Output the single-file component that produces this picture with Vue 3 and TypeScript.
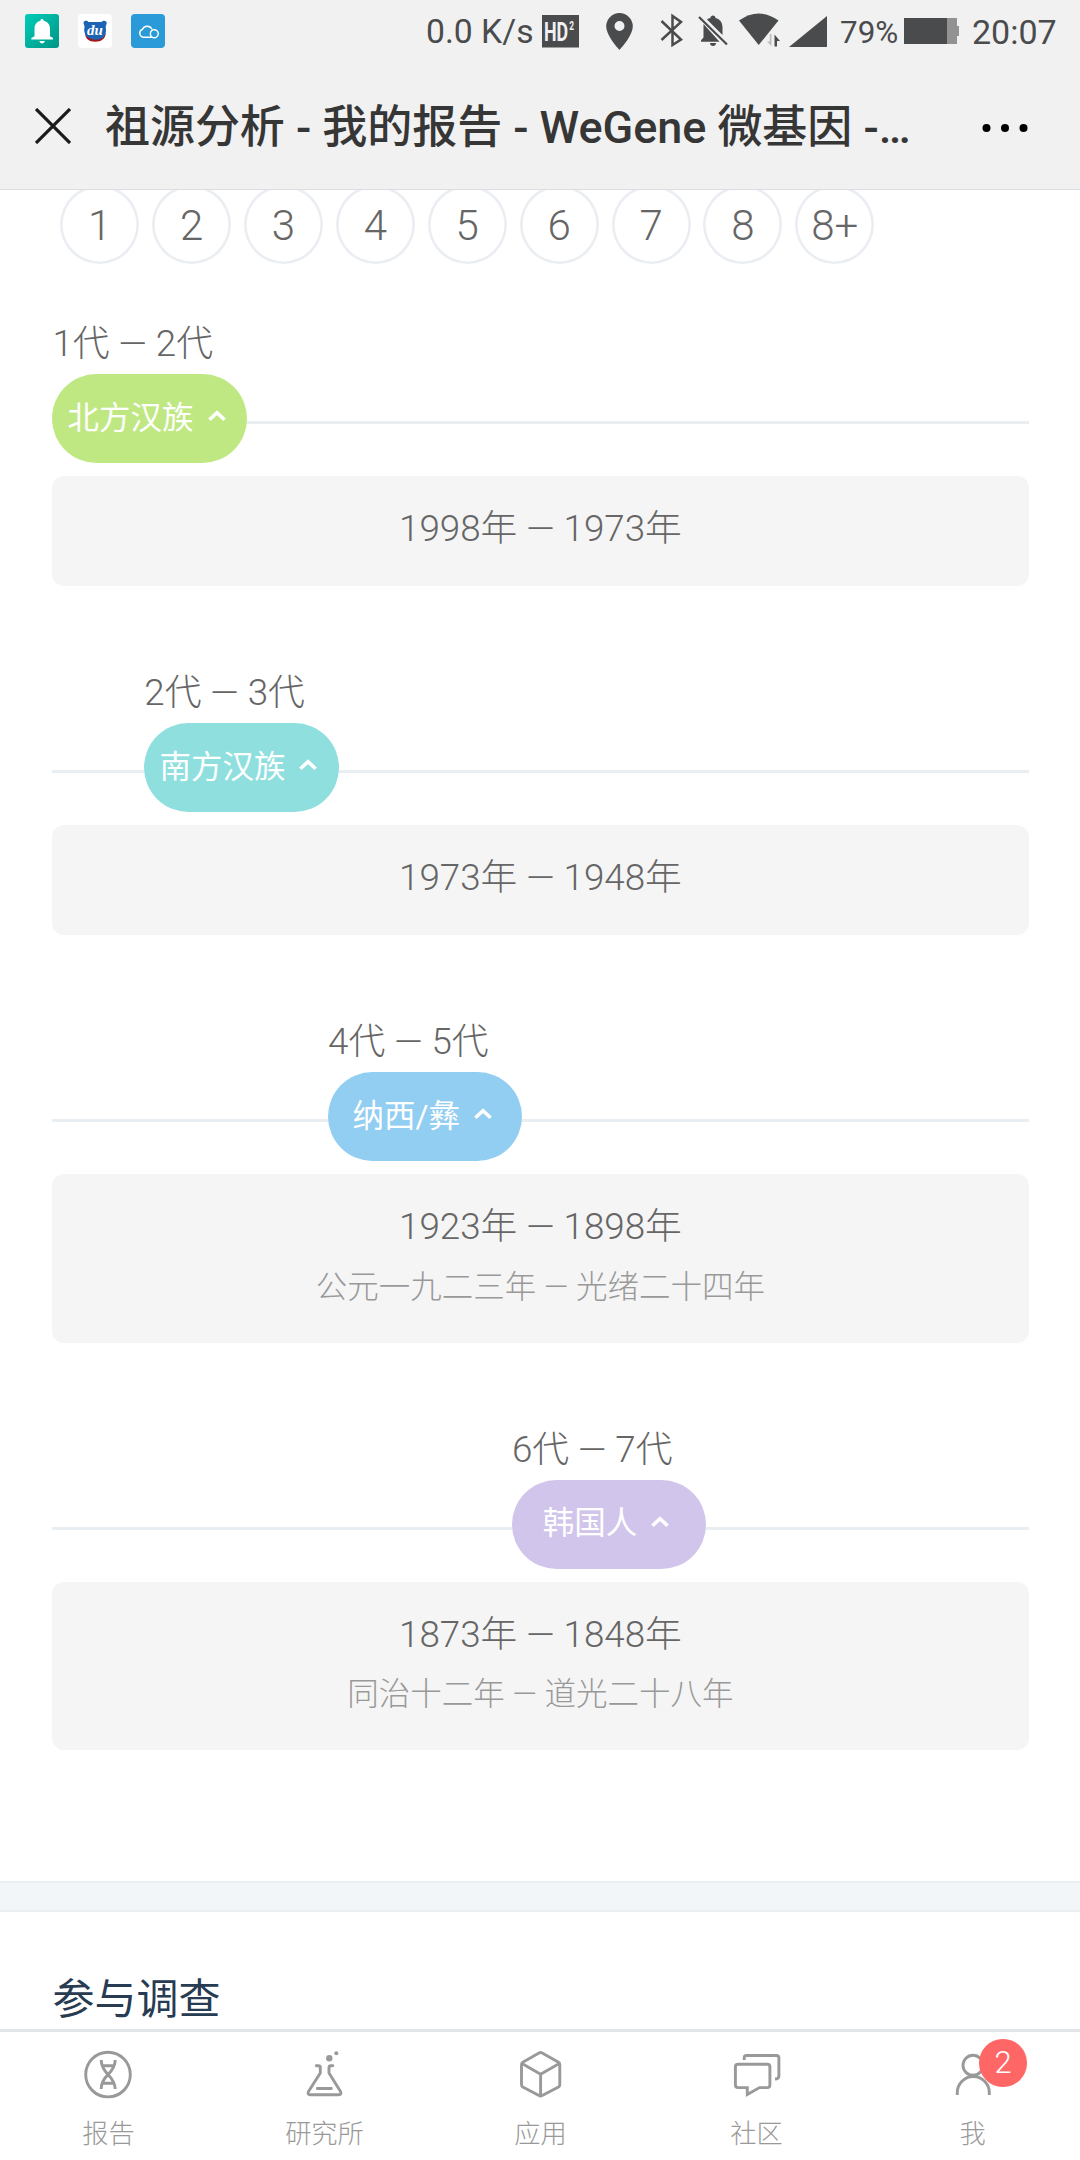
<script setup lang="ts">
interface Period {
  from: number
  to: number
  name: string
  color: string
  years: string
  era?: string
}

const generations: string[] = ['1', '2', '3', '4', '5', '6', '7', '8', '8+']

const STEP = 91.9

const periods: Period[] = [
  { from: 1, to: 2, name: '北方汉族', color: '#bfe883', years: '1998年 — 1973年' },
  { from: 2, to: 3, name: '南方汉族', color: '#8fdfdf', years: '1973年 — 1948年' },
  { from: 4, to: 5, name: '纳西/彝', color: '#92cdf2', years: '1923年 — 1898年', era: '公元一九二三年 — 光绪二十四年' },
  { from: 6, to: 7, name: '韩国人', color: '#d1c5eb', years: '1873年 — 1848年', era: '同治十二年 — 道光二十八年' },
]

const offset = (p: Period): string => `${(p.from - 1) * STEP}px`
</script>

<template>
  <div class="screen">
    <header class="status">
      <div class="apps">
        <svg width="34" height="34" viewBox="0 0 34 34">
          <defs>
            <linearGradient id="teal" x1="0" y1="0" x2="1" y2="1">
              <stop offset="0" stop-color="#00cdb8" />
              <stop offset="1" stop-color="#019585" />
            </linearGradient>
          </defs>
          <rect width="34" height="34" rx="3" fill="url(#teal)" />
          <path d="M17 5c1 0 1.6.7 1.7 1.7C22.600 7.600 25 10.500 25 14.500V22.300L28 24v1.500H6.300V24L9.500 22.300V14.500C9.500 10.500 11.800 7.600 15.400 6.700 15.500 5.700 16 5 17 5zM14.200 27h5.800c-.8 1.600-1.600 2.500-2.900 2.500s-2.200-.9-2.900-2.500z" fill="#fff" />
        </svg>
        <svg width="34" height="34" viewBox="0 0 34 34">
          <rect width="34" height="34" rx="4" fill="#fff" />
          <path d="M7 18c0 7 4 9.700 10.300 9.700S27 25 28 19L24 24H12z" fill="#a3171b" />
          <path d="M5.500 8.500C6 6.500 9 6 10.500 8h13C25 6 28.500 6.500 28.700 8.800 28.700 10.500 27.700 11.500 27.700 13 29 20 26.500 25.800 17.500 25.800 8 25 5.300 19 6.500 13.500 6.800 11.500 5.500 10.500 5.500 8.500z" fill="#1c62b5" />
          <text x="17" y="21" text-anchor="middle" font-family="Liberation Serif, serif" font-style="italic" font-weight="700" font-size="15" fill="#fff">du</text>
        </svg>
        <svg width="34" height="34" viewBox="0 0 34 34">
          <rect width="34" height="34" rx="4" fill="#2a9bd8" />
          <path d="M20.500 23.200H12.300A4 4 0 0 1 11.300 15.500 5.300 5.300 0 0 1 21 15.200M19.800 17.800a4 4 0 1 1-.2 3.400c-.4-1.200-.2-2.600.2-3.400z" fill="none" stroke="#fff" stroke-width="1.400" />
        </svg>
      </div>
      <span class="speed">0.0 K/s</span>
      <svg class="signals" width="290" height="62" viewBox="540 0 290 62" fill="#4a4b4d">
        <rect x="542" y="15" width="37" height="32.500" />
        <text transform="translate(544 40.800) scale(.7 1)" font-family="Roboto, sans-serif" font-weight="700" font-size="25.500" fill="#f1f1f1">HD<tspan dx="1.500" dy="-10.500" font-size="12">2</tspan></text>
        <path fill-rule="evenodd" d="M619.500 13a13.300 13.300 0 0 0-13.300 13.300C606.200 36 619.500 50 619.500 50S632.800 36 632.800 26.300A13.300 13.300 0 0 0 619.500 13zm0 8a5 5 0 1 1 0 10 5 5 0 0 1 0-10z" />
        <path d="M661.500 21L681 39.500 672.500 45V16L681 22 661.500 40" fill="none" stroke="#4a4b4d" stroke-width="2.500" />
        <path d="M713 15.500c1.500 0 2.500 1 2.500 2.600 4.500 1.200 7 4.500 7 9.400v7.500L707 19.500c.9-.7 2-1.200 3.400-1.500 0-1.500 1.100-2.500 2.600-2.500zM703.500 24L719.500 41.700H701v-1.500l2.500-2.700zM710 43h6c0 1.800-1.300 3-3 3s-3-1.200-3-3z" />
        <path d="M699 17L727 44.500" fill="none" stroke="#4a4b4d" stroke-width="2.200" />
        <path d="M739 20.500Q758.700 6.500 778.500 20.500L758.700 45z" />
        <path d="M771.500 34V46L767 41.500H769.800V34z" fill="#bbb" />
        <path d="M774.500 34.500L780 41H777V46.500H774.500z" />
        <path d="M827 16V47H789z" />
      </svg>
      <span class="percent">79%</span>
      <svg class="battery" width="56" height="62" viewBox="0 0 56 62">
        <rect x="0" y="18" width="43" height="26" fill="#4a4b4d" />
        <rect x="43" y="18" width="10" height="26" fill="#929292" />
        <rect x="53" y="26" width="2" height="10" fill="#929292" />
      </svg>
      <span class="clock">20:07</span>
    </header>

    <div class="titlebar">
      <svg class="close" width="36" height="36" viewBox="0 0 36 36">
        <path d="M1 1L35 35M35 1L1 35" stroke="#1a1a1a" stroke-width="3.200" fill="none" />
      </svg>
      <h1>祖源分析 - 我的报告 - WeGene 微基因 -…</h1>
      <svg class="more" width="46" height="10" viewBox="0 0 46 10">
        <circle cx="4.500" cy="5" r="4" /><circle cx="23" cy="5" r="4" /><circle cx="41.500" cy="5" r="4" />
      </svg>
    </div>

    <main>
      <div class="generations">
        <span v-for="g in generations" :key="g" class="gen">{{ g }}</span>
      </div>

      <section v-for="p in periods" :key="p.from" class="period">
        <div class="label" :style="{ marginLeft: offset(p) }">{{ p.from }}代 — {{ p.to }}代</div>
        <div class="track">
          <div class="pill" :style="{ marginLeft: offset(p), backgroundColor: p.color }">
            <span>{{ p.name }}</span>
            <svg width="18" height="12" viewBox="0 0 18 12">
              <path d="M1.400 9.700L9 2.700 16.600 9.700" fill="none" stroke="#fff" stroke-width="3.600" />
            </svg>
          </div>
        </div>
        <div class="card">
          <p class="years">{{ p.years }}</p>
          <p v-if="p.era" class="era">{{ p.era }}</p>
        </div>
      </section>

      <div class="divider"></div>
      <h2>参与调查</h2>
    </main>

    <nav>
      <a class="tab">
        <svg viewBox="0 0 72 60">
          <circle cx="36" cy="30.600" r="22.300" />
          <path d="M29.200 16C29.200 23 32.500 26.800 36 30.400 39.500 34 43.200 38 43.200 45M43.200 16C43.200 23 39.700 26.800 36.200 30.400 32.500 34 29.200 38 29.200 45M30.500 21.700H42M30.500 39.300H42" />
        </svg>
        <span>报告</span>
      </a>
      <a class="tab">
        <svg viewBox="0 0 72 60">
          <path stroke-linecap="round" stroke-linejoin="round" d="M28.300 21.800H30.500Q32.300 21.800 32.300 23.600V29L20.500 47.500Q19 50.700 22.200 50.700H50.800Q54 50.700 52.500 47.500L41 29V23.600Q41 21.800 42.800 21.800H44.800M29.300 44.500H43.300" />
          <circle class="solid" cx="41.300" cy="14.300" r="3.200" />
          <circle class="solid" cx="48.300" cy="9.300" r="2" />
        </svg>
        <span>研究所</span>
      </a>
      <a class="tab">
        <svg viewBox="0 0 72 60">
          <path stroke-linejoin="round" d="M35 9Q36.600 8 38.200 9L54.500 18.300Q55.800 19.200 55.800 20.800V40.600Q55.800 42.200 54.500 43L38.200 51.500Q36.600 52.400 35 51.500L18.800 43Q17.500 42.200 17.500 40.600V20.800Q17.500 19.200 18.800 18.300ZM18 19.500L36.600 30.200 55.300 19.500M36.600 30.200V52" />
        </svg>
        <span>应用</span>
      </a>
      <a class="tab">
        <svg viewBox="0 0 72 60">
          <path d="M18 20.300H47.300Q49.900 20.300 49.900 22.900V41Q49.900 43.600 47.300 43.600H39.500L27.300 50.500V43.600H18Q15.400 43.600 15.400 41V22.900Q15.400 20.300 18 20.300Z" />
          <path d="M24.200 16V13.800Q24.200 11.500 26.500 11.500H56.300Q58.900 11.500 58.900 14.100V32Q58.900 35 55 35" />
        </svg>
        <span>社区</span>
      </a>
      <a class="tab">
        <svg viewBox="0 0 72 60">
          <circle cx="37" cy="21.300" r="10" />
          <path d="M21.300 51V48.500A16 16 0 0 1 53.300 48.500V51" />
        </svg>
        <span>我</span>
        <b class="badge">2</b>
      </a>
    </nav>
  </div>
</template>

<style>
body {
  margin: 0;
  background: #fff;
}
</style>

<style scoped>
.screen {
  width: 1080px;
  height: 2160px;
  display: flex;
  flex-direction: column;
  overflow: hidden;
  background: #fff;
  color: #666;
  font-family: Roboto, "Noto Sans CJK SC", sans-serif;
  font-weight: 300;
}
.status {
  height: 62px;
  flex: none;
  display: flex;
  background: #f1f1f1;
  color: #4a4b4d;
  font-weight: 400;
  line-height: 64px;
  white-space: nowrap;
}
.status svg { display: block; flex: none; }
.apps {
  box-sizing: border-box;
  display: flex;
  gap: 19px;
  padding: 14px 0 0 25px;
  width: 426px;
}
.speed { width: 114px; font-size: 33.700px; }
.percent { width: 64px; margin-left: 10px; font-size: 31.400px; line-height: 66px; }
.clock { margin-left: 12px; font-size: 34px; }
.titlebar {
  height: 127px;
  flex: none;
  display: flex;
  align-items: center;
  background: #f1f1f1;
  border-bottom: 1px solid #dcdfe1;
}
.close { margin: 1px 0 0 34.500px; flex: none; }
h1 {
  margin: 5px 0 0 34.500px;
  width: 877px;
  font-size: 45px;
  letter-spacing: -0.050px;
  line-height: 60px;
  font-weight: 500;
  color: #363636;
  white-space: nowrap;
}
.more { margin-top: 5px; flex: none; }
main {
  flex: 1;
  min-height: 0;
  overflow: hidden;
}
.generations {
  display: flex;
  gap: 12.900px;
  margin: -5px 0 50px 60.200px;
}
.gen {
  width: 79px;
  height: 79px;
  box-shadow: inset 0 0 0 2.600px #eaeef2;
  border-radius: 50%;
  text-align: center;
  font-size: 42px;
  line-height: 82px;
}
.period { margin: 0 51.500px 77px 52.400px; }
.label {
  height: 60px;
  line-height: 59px;
  font-size: 36.750px;
  white-space: nowrap;
}
.track {
  height: 89px;
  background: linear-gradient(#e9eef2, #e9eef2) 0 47px / 100% 3px no-repeat;
}
.pill {
  width: 194.300px;
  height: 89px;
  border-radius: 44.500px;
  display: flex;
  align-items: center;
  justify-content: center;
  color: #fff;
  font-size: 31.500px;
  font-weight: 400;
  line-height: 50px;
}
.pill svg { margin: -5px 6px 0 14px; }
.card {
  margin-top: 13px;
  padding: 28px 0 32px;
  border-radius: 12px;
  background: #f5f5f5;
  text-align: center;
}
.card p { margin: 0; line-height: 50px; height: 50px; }
.years { font-size: 36.750px; }
.card .era { margin-top: 10.500px; margin-bottom: -2px; font-size: 31.500px; color: #999; }
.divider {
  margin-top: 131px;
  height: 27px;
  background: #f3f6f9;
  border-top: 2px solid #ebeef1;
  border-bottom: 2px solid #ebeef1;
}
h2 {
  margin: 58px 0 0 52.500px;
  font-size: 42px;
  font-weight: 400;
  line-height: 60px;
  color: #273b52;
}
nav {
  height: 128px;
  flex: none;
  display: flex;
  background: #fff;
  border-top: 3px solid #e1e5e8;
}
.tab {
  flex: 1;
  position: relative;
  display: flex;
  flex-direction: column;
  align-items: center;
  padding-top: 12px;
  color: #999;
  font-size: 26.250px;
}
.tab svg {
  width: 72px;
  height: 60px;
  fill: none;
  stroke: #999;
  stroke-width: 2.900;
}
.tab .solid { fill: #999; stroke: none; }
.tab span { margin: 10px 0 0 1px; line-height: 40px; }
.badge {
  position: absolute;
  left: 115.300px;
  top: 7.300px;
  width: 47.500px;
  height: 47.500px;
  border-radius: 50%;
  background: #f66;
  color: #fff;
  text-align: center;
  font-size: 31px;
  line-height: 48px;
  font-weight: 300;
}
</style>
